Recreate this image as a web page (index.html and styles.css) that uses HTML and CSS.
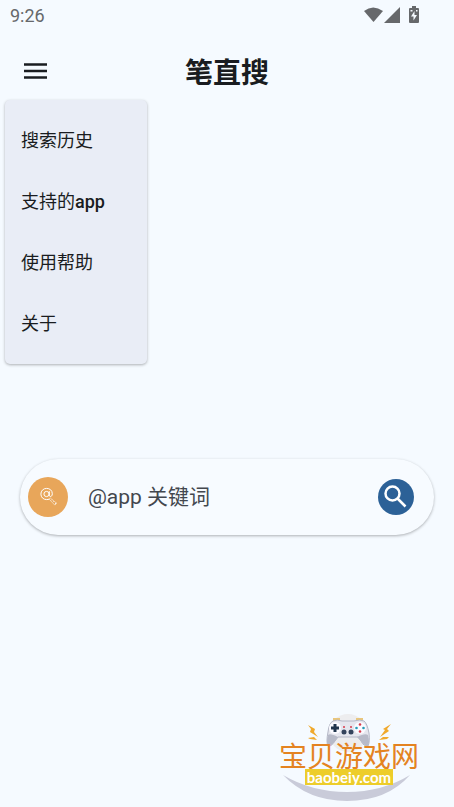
FILE: index.html
```html
<!DOCTYPE html>
<html lang="zh-CN">
<head>
  <meta charset="UTF-8">
  <meta name="viewport" content="width=device-width, initial-scale=1.0">
  <title>笔直搜</title>
  <link rel="stylesheet" href="styles.css">
</head>
<body>

  <div class="status-bar">
    <span class="time">9:26</span>
    <svg class="status-icons" width="56" height="18" viewBox="0 0 56 18" aria-hidden="true">
      <path d="M0 5Q9 -2 19 5L9.500 16Z"/>
      <path d="M20 17L36 1V17Z"/>
      <path d="M48 0h4v2h2q1 0 1 1v13q0 1-1 1h-8q-1 0-1-1V3q0-1 1-1h2z"/>
      <path class="bolt" d="M50.500 5l-3.500 5.500h2.500v4l3.500-5.500h-2.500zM46.500 4h2v1.500h-2zM52 4h1.500v1.500H52z"/>
    </svg>
  </div>

  <header class="app-bar">
    <button class="menu-button" type="button" aria-label="菜单">
      <svg width="24" height="16" viewBox="0 0 24 16" aria-hidden="true">
        <path d="M0 1.500h23M0 8h23M0 14.500h23"/>
      </svg>
    </button>
    <h1>笔直搜</h1>
  </header>

  <nav class="menu">
    <a href="#">搜索历史</a>
    <a href="#">支持的<span class="latin">app</span></a>
    <a href="#">使用帮助</a>
    <a href="#">关于</a>
  </nav>

  <form class="search">
    <button class="app-button" type="button" aria-label="选择app">
      <svg width="40" height="40" viewBox="0 0 40 40" aria-hidden="true">
        <circle cx="18.500" cy="17" r="2.600"/>
        <path d="M21.300 14.200v4c0 2.200 3 1.800 3-1.400 0-3.500-2.600-5.400-5.700-5.400-3.400 0-5.700 2.500-5.700 5.700s2.500 5.500 5.700 5.500q1.500 0 2.600-.5"/>
        <path class="handle" d="M21 22l1.500-.8 6 5-1.700 1.900zM23 23.500l1-1M25 25l1-1"/>
        <path d="M27 27.200l1.300-1.200"/>
      </svg>
    </button>
    <input type="text" placeholder="@app 关键词" aria-label="关键词">
    <button class="search-button" type="submit" aria-label="搜索">
      <svg width="36" height="36" viewBox="0 0 36 36" aria-hidden="true">
        <circle cx="14.500" cy="14.500" r="7"/>
        <path d="M19.500 19.500l8 8"/>
      </svg>
    </button>
  </form>

  <footer class="brand">
    <svg class="brand-art" width="140" height="90" viewBox="0 0 140 90" aria-hidden="true">
      <path class="swoosh" d="M4 62Q33 79 68 79Q103 79 131 62Q108 88 68 88Q29 88 4 62Z"/>
      <circle class="glow" cx="69" cy="20" r="19"/>
      <path class="spark" d="M29 12l7 4-1 3 4 5-8-5 1-3zM29 25l6-1 3 3-7-1zM112 11l-8 5 2 1-5 7 9-6-2-2zM110 24l-6 0-4 3 8-1z"/>
      <path class="trigger" d="M54 8V5h7v3M77 8V5h7v3"/>
      <path class="pad" d="M54 8q4-2 9 0h12q6-2 10 0 3 2 5 12 1 9-1 13-4 1-7-5l-3-4H59l-3 4q-4 6-7 5-2-4 0-14 1-9 5-11z"/>
      <path class="grip" d="M49 22q2-2 10 2l-3 4q-4 6-7 5-2-3 0-11zM89 22q-3-2-11 2l4 4q4 6 7 5 2-3 0-11z"/>
      <circle class="face" cx="56" cy="15" r="6"/>
      <circle class="face" cx="81" cy="15" r="6"/>
      <path class="cross" d="M56 11v8M52 15h8"/>
      <circle class="stick" cx="65" cy="19" r="2.500"/>
      <circle class="stick" cx="72" cy="19" r="2.500"/>
      <circle class="red" cx="65" cy="14" r="1"/>
      <circle class="red" cx="72" cy="14" r="1"/>
      <circle class="red" cx="81" cy="11.500" r="1.300"/>
      <circle class="red" cx="81" cy="18.500" r="1.300"/>
      <circle class="blue" cx="77.500" cy="15" r="1.300"/>
      <circle class="blue" cx="84.500" cy="15" r="1.300"/>
    </svg>
    <span class="brand-name">宝贝游戏网</span>
    <span class="brand-url">baobeiy.com</span>
  </footer>

</body>
</html>
```
FILE: styles.css
```css
* {
  box-sizing: border-box;
}

body {
  display: flex;
  flex-direction: column;
  min-height: 100vh;
  margin: 0;
  background-color: #f5faff;
  color: #191c20;
  font-family: Roboto, "Noto Sans CJK SC", sans-serif;
}

button {
  display: flex;
  padding: 0;
  border: none;
  background: none;
  cursor: pointer;
}

/* Status bar */
.status-bar {
  display: flex;
  justify-content: space-between;
  align-items: center;
  height: 30px;
  padding: 0 34px 0 10px;
  color: #66686b;
}

.time {
  font-size: 18px;
}

.status-icons {
  fill: #66686b;
}

.status-icons .bolt {
  fill: #f5faff;
}

/* App bar */
.app-bar {
  display: grid;
  grid-template-columns: 24px 1fr 24px;
  align-items: center;
  height: 70px;
  padding: 12px 24px 0;
}

.menu-button svg {
  fill: none;
  stroke: #191c20;
  stroke-width: 2.5;
}

h1 {
  margin: 0;
  padding-top: 6px;
  font-size: 28px;
  line-height: 40px;
  text-align: center;
}

/* Drop-down menu */
.menu {
  display: flex;
  flex-direction: column;
  align-self: flex-start;
  min-width: 142px;
  margin-left: 5px;
  padding: 10px 16px;
  border-radius: 5px;
  background-color: #e9edf6;
  box-shadow: 0 1px 3px rgba(0, 0, 0, 0.3);
}

.menu a {
  color: #191c20;
  font-size: 18px;
  line-height: 61px;
  text-decoration: none;
}

.latin {
  font-weight: 500;
}

/* Search box */
.search {
  display: flex;
  align-items: center;
  height: 76px;
  margin: 95px 20px 0;
  padding: 0 20px 0 8px;
  border-radius: 38px;
  background-color: #f7fbff;
  box-shadow: 0 1px 3px rgba(0, 0, 0, 0.3);
}

.search input {
  flex: 1;
  min-width: 0;
  margin: 0 20px;
  padding: 0;
  border: none;
  outline: none;
  background: none;
  color: #191c20;
  font-family: inherit;
  font-size: 21px;
  line-height: 32px;
}

.search input::placeholder {
  color: #43474e;
}

.app-button,
.search-button {
  border-radius: 50%;
}

.app-button svg,
.search-button svg {
  fill: none;
  stroke: #fff;
}

.app-button {
  background-color: #e8a65a;
}

.app-button .handle {
  stroke-width: 0.5;
}

.search-button {
  background-color: #2c6197;
}

.search-button svg {
  stroke-width: 2.5;
}

/* Brand mark */
.brand {
  position: relative;
  display: flex;
  flex-direction: column;
  align-items: center;
  align-self: flex-end;
  width: 140px;
  height: 94px;
  margin-top: auto;
  margin-right: 35px;
  padding-top: 28px;
}

.brand-art {
  position: absolute;
  top: 0;
  left: 0;
}

.brand-name {
  position: relative;
  color: #e48321;
  font-family: "Noto Sans CJK SC", sans-serif;
  font-size: 28px;
  line-height: 28px;
  white-space: nowrap;
}

.brand-url {
  position: relative;
  padding: 0 2px;
  background-color: #edcd2a;
  color: #fff;
  font-family: Lato, sans-serif;
  font-size: 15px;
  font-weight: 700;
  line-height: 16px;
}

.swoosh {
  fill: #c9cbd9;
}

.glow {
  fill: #ededef;
}

.spark {
  fill: #f0a92c;
}

.trigger {
  fill: #e9c67c;
}

.pad {
  fill: #e5e6ee;
  stroke: #b4b7c6;
}

.grip {
  fill: #b7bac8;
}

.face {
  fill: #fafaff;
}

.cross {
  stroke: #20354d;
  stroke-width: 3;
}

.stick {
  fill: #34435c;
}

.red {
  fill: #d83b4b;
}

.blue {
  fill: #269cb8;
}
```
